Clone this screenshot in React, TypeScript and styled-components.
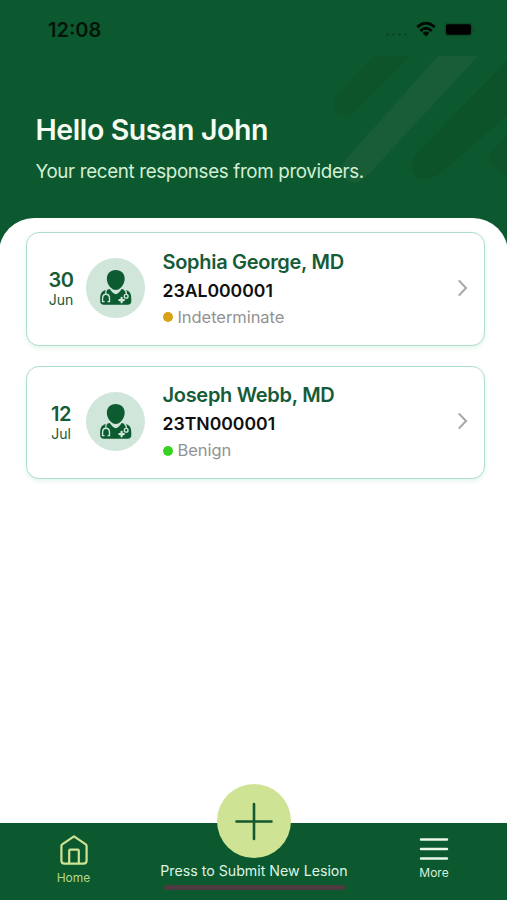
import React from "react";
import styled, { createGlobalStyle } from "styled-components";

const GREEN = "#0d592f";
const LIME = "#cfe394";

const GlobalStyle = createGlobalStyle`
  * { box-sizing: border-box; }
  body { margin: 0; background: ${GREEN}; font-family: Inter, "Liberation Sans", sans-serif; }
`;

const Screen = styled.div`
  width: 507px;
  height: 900px;
  display: flex;
  flex-direction: column;
  overflow: hidden;
  background: ${GREEN};
`;

const Header = styled.header`
  position: relative;
  height: 217.5px;
  flex: none;
`;

const Stripes = styled.svg`
  position: absolute;
  top: 0;
  right: 0;
`;

const StatusBar = styled.div`
  position: relative;
  display: flex;
  align-items: center;
  justify-content: space-between;
  height: 60px;
  padding: 0 31px 0 48px;
`;

const Clock = styled.span`
  font-size: 20px;
  font-weight: 600;
  line-height: 24px;
  color: #02150a;
`;

const Greeting = styled.div`
  position: relative;
  display: flex;
  flex-direction: column;
  padding: 53px 35.5px 0;
  white-space: nowrap;
`;

const Title = styled.h1`
  margin: 0;
  font-size: 28.5px;
  font-weight: 600;
  line-height: 34px;
  letter-spacing: -0.4px;
  color: #f4fbf0;
`;

const Subtitle = styled.p`
  margin: 11px 0 0;
  font-size: 18.8px;
  line-height: 27px;
  letter-spacing: -0.35px;
  color: #d3efd6;
`;

const Sheet = styled.main`
  flex: 1;
  display: flex;
  flex-direction: column;
  gap: 20px;
  margin: 0 -1px;
  padding: 14.5px 23.5px 0 27px;
  border-radius: 35px 35px 0 0;
  background: #fff;
`;

const Card = styled.article`
  display: flex;
  align-items: center;
  height: 113.5px;
  padding: 0 14.5px 0 16px;
  border: 1.5px solid #addfc8;
  border-radius: 13px;
  background: #fff;
  box-shadow: 0 2px 4px rgba(120, 210, 165, 0.22);
`;

const DateBlock = styled.div`
  width: 36px;
  display: flex;
  flex-direction: column;
  align-items: center;
  color: #165b38;
`;

const Day = styled.span`
  font-size: 20px;
  font-weight: 600;
  line-height: 22px;
  letter-spacing: -0.4px;
`;

const Month = styled.span`
  font-size: 14px;
  line-height: 17px;
`;

const Avatar = styled.div`
  width: 59.5px;
  height: 59.5px;
  margin: -2px 17.5px 0 6.5px;
  border-radius: 50%;
  background: #d0e6da;
  overflow: hidden;
`;

const Details = styled.div`
  flex: 1;
  display: flex;
  flex-direction: column;
  white-space: nowrap;
`;

const Name = styled.span`
  font-size: 20px;
  font-weight: 600;
  line-height: 28px;
  letter-spacing: -0.3px;
  color: #165b38;
`;

const CaseId = styled.span`
  font-size: 17.6px;
  font-weight: 600;
  line-height: 29px;
  color: #101010;
`;

const Status = styled.span`
  display: flex;
  align-items: center;
  gap: 5px;
  font-size: 16.5px;
  line-height: 25px;
  letter-spacing: -0.06px;
  color: #929292;
`;

const Dot = styled.i<{ $color: string }>`
  width: 10px;
  height: 10px;
  flex: none;
  border-radius: 50%;
  background: ${(p) => p.$color};
`;

const NavBar = styled.nav`
  flex: none;
  height: 77.5px;
  display: grid;
  grid-template-columns: 147px 214px 146px;
  background: ${GREEN};
`;

const NavItem = styled.div<{ $color: string; $top: number; $gap: number }>`
  display: flex;
  flex-direction: column;
  align-items: center;
  gap: ${(p) => p.$gap}px;
  padding-top: ${(p) => p.$top}px;
  font-size: 12px;
  line-height: 16px;
  color: ${(p) => p.$color};
`;

const Submit = styled.div`
  display: flex;
  flex-direction: column;
  align-items: center;
  margin-top: -38.5px;
  white-space: nowrap;
`;

const AddButton = styled.button`
  width: 74px;
  height: 74px;
  flex: none;
  padding: 0;
  border: 0;
  border-radius: 50%;
  background: ${LIME};
`;

const SubmitLabel = styled.span`
  margin-top: 4px;
  font-size: 14.2px;
  line-height: 18px;
  color: #dff3e4;
`;

const HomeIndicator = styled.div`
  width: 181px;
  height: 5px;
  margin-top: 5px;
  border-radius: 3px;
  background: #4d3b3f;
`;

const StatusIcons = () => (
  <svg width="92" height="30" viewBox="384 15 92 30">
    <g fill="#0b4726">
      <circle cx="387.5" cy="34.5" r="1.4" />
      <circle cx="393.5" cy="34.5" r="1.4" />
      <circle cx="399.5" cy="34.5" r="1.4" />
      <circle cx="405.5" cy="34.5" r="1.4" />
    </g>
    <g fill="none" stroke="#010a04" strokeWidth="2.8">
      <path d="M417.2 27.1Q426 19.2 434.8 27.1" />
      <path d="M420.4 30.9Q426 25.7 431.6 30.9" />
    </g>
    <path d="M422.6 33Q426 30.1 429.4 33L426 36.6Z" fill="#010a04" />
    <rect x="444.5" y="22.8" width="28" height="13.4" rx="3.5" fill="#0b4a27" />
    <rect x="446" y="24.3" width="25" height="10.4" rx="2" fill="#000" />
    <path d="M473.7 27.5q2.2 2 0 4z" fill="#0b4a27" />
  </svg>
);

const DoctorIcon = () => (
  <svg width="59.5" height="59.5" viewBox="0 0 60 60">
    <path
      d="M14.3 41.5C14.3 35.7 15.6 33.2 20.7 32L24 31.2Q27.2 36 30 36.6Q32.8 36 36 31.2L39.3 32C44.4 33.2 45.7 35.7 45.7 41.5V43.4Q45.7 47.2 42 47.2H18Q14.3 47.2 14.3 43.4Z"
      fill="#0d5b30"
    />
    <path
      d="M30 12C35.6 12 39 15.5 39 20.9C39 27.1 34 32.3 30 32.3C26 32.3 21 27.1 21 20.9C21 15.5 24.4 12 30 12Z"
      fill="#0d5b30"
    />
    <g fill="none" stroke="#d0e6da" strokeWidth="1.4" strokeLinecap="round">
      <path d="M21 31.6Q19.4 33.5 20 36.4M18.2 44H16.7V40.9C16.7 38 18 36.6 20.2 36.6S23.7 38 23.7 40.9V44H22.2" />
      <path d="M38.6 31.6Q41 33.3 40.7 36" />
      <circle cx="40.5" cy="38.6" r="1.9" />
    </g>
    <path d="M33.6 42.4H38.2M35.9 40.1V44.7" stroke="#d0e6da" strokeWidth="2.2" strokeLinecap="round" />
  </svg>
);

const Chevron = () => (
  <svg width="12" height="20" viewBox="0 1 12 20" fill="none" stroke="#a8a8a8" strokeWidth="2.1">
    <path d="M1.8 2.4L9 10L1.8 17.6" />
  </svg>
);

const HomeIcon = () => (
  <svg width="28" height="30" viewBox="0 0 28 30" fill="none" stroke={LIME} strokeWidth="2.2" strokeLinejoin="round">
    <path d="M1.4 11Q1.4 10 2.2 9.3L14 1.4L25.8 9.3Q26.6 10 26.6 11V25.5Q26.6 28.6 23.5 28.6H4.5Q1.4 28.6 1.4 25.5Z" />
    <path d="M9.2 28.6V15.8Q9.2 14.6 10.4 14.6H17.6Q18.8 14.6 18.8 15.8V28.6" />
  </svg>
);

const MenuIcon = () => (
  <svg width="30" height="24" viewBox="0 0 30 24" stroke="#eaf8ec" strokeWidth="2.4" strokeLinecap="round">
    <path d="M2 2.5H28M2 12H28M2 21.5H28" />
  </svg>
);

const PlusIcon = () => (
  <svg width="74" height="74" viewBox="0 0 74 74" stroke="#15592f" strokeWidth="2.6" strokeLinecap="round">
    <path d="M19.5 37.5H54.5M37 20V55" />
  </svg>
);

const responses = [
  { day: "30", month: "Jun", name: "Sophia George, MD", id: "23AL000001", status: "Indeterminate", color: "#d9a116" },
  { day: "12", month: "Jul", name: "Joseph Webb, MD", id: "23TN000001", status: "Benign", color: "#37d321" },
];

export default function App() {
  return (
    <>
      <GlobalStyle />
      <Screen>
        <Header>
          <Stripes width="187" height="217" viewBox="320 0 187 217">
            <path d="M374 56H410L356 111Q345 119 336 113Q330 105 337 94Z" fill="#0d542b" />
            <path d="M438 56H478L367 176Q354 188 344 178Q338 170 347 158Z" fill="#185d36" />
            <path d="M507 60V116L442 172Q426 184 415 176Q407 166 418 152Z" fill="#0d532a" />
            <path d="M507 136V174Q495 172 490 163Q487 155 495 147Z" fill="#0d542b" />
          </Stripes>
          <StatusBar>
            <Clock>12:08</Clock>
            <StatusIcons />
          </StatusBar>
          <Greeting>
            <Title>Hello Susan John</Title>
            <Subtitle>Your recent responses from providers.</Subtitle>
          </Greeting>
        </Header>
        <Sheet>
          {responses.map((r) => (
            <Card key={r.id}>
              <DateBlock>
                <Day>{r.day}</Day>
                <Month>{r.month}</Month>
              </DateBlock>
              <Avatar>
                <DoctorIcon />
              </Avatar>
              <Details>
                <Name>{r.name}</Name>
                <CaseId>{r.id}</CaseId>
                <Status>
                  <Dot $color={r.color} />
                  {r.status}
                </Status>
              </Details>
              <Chevron />
            </Card>
          ))}
        </Sheet>
        <NavBar>
          <NavItem $color="#b5d78a" $top={12} $gap={5}>
            <HomeIcon />
            <span>Home</span>
          </NavItem>
          <Submit>
            <AddButton aria-label="Submit new lesion">
              <PlusIcon />
            </AddButton>
            <SubmitLabel>Press to Submit New Lesion</SubmitLabel>
            <HomeIndicator />
          </Submit>
          <NavItem $color="#d8f0dc" $top={14} $gap={4}>
            <MenuIcon />
            <span>More</span>
          </NavItem>
        </NavBar>
      </Screen>
    </>
  );
}
